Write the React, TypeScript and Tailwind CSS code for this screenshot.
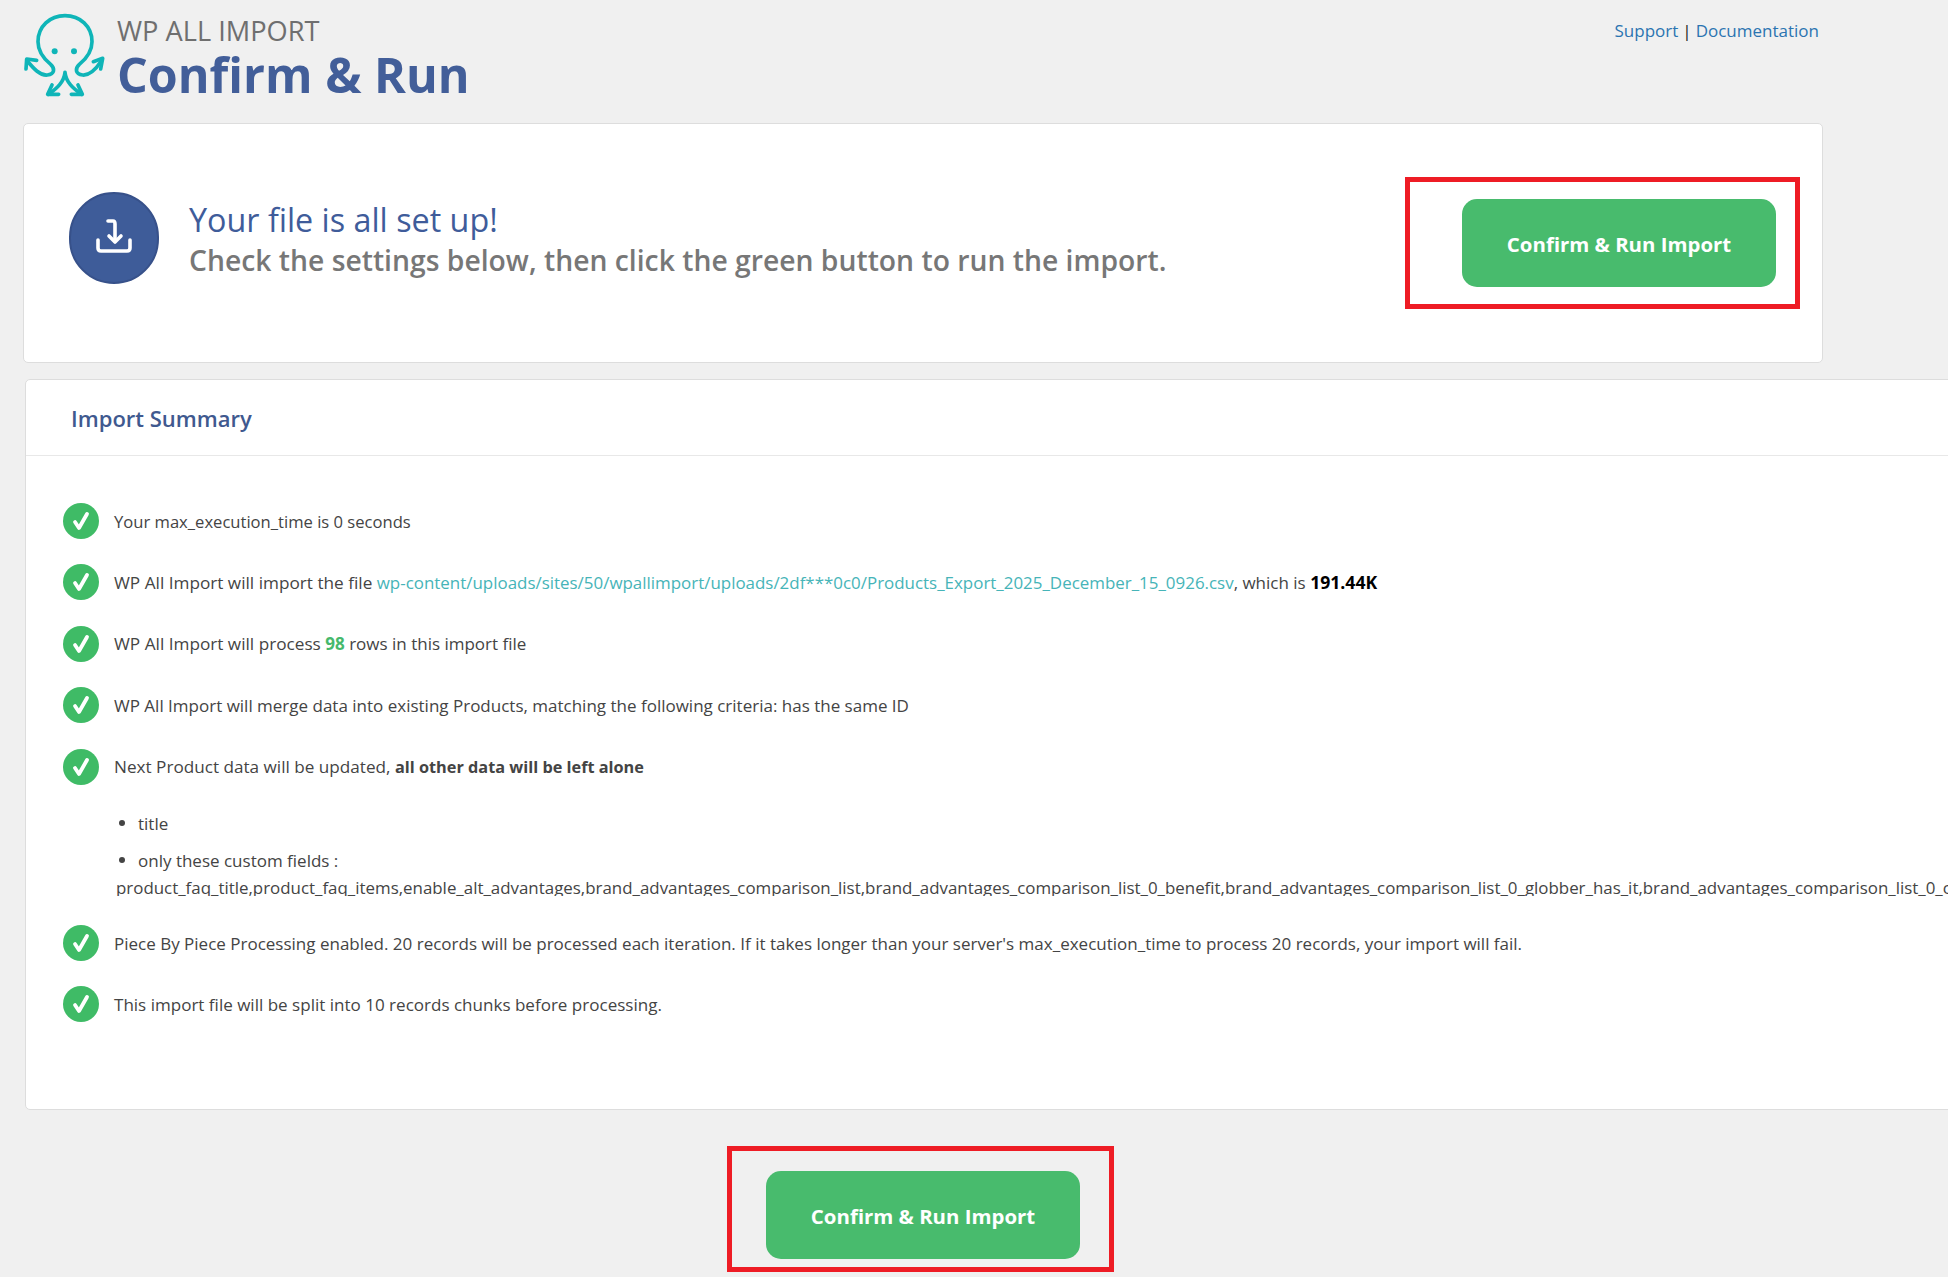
const Logo = () => (
  <svg viewBox="0 0 330 300" className="w-[110px] h-[100px] shrink-0 -ml-[15px] -mt-[3px]" fill="none" stroke="#0fb5b8" strokeWidth="11" strokeLinecap="round" strokeLinejoin="round">
    <path d="M52 168 C72 192 90 212 112 210 C135 208 135 190 122 178 C100 160 84 140 84 110 C84 64 120 32 165 32 C210 32 246 64 246 110 C246 140 230 160 208 178 C195 190 195 208 218 210 C240 212 258 192 274 168" />
    <path d="M48 192 L50 162 L80 166" />
    <path d="M250 170 L278 160 L272 192" />
    <path d="M165 202 C162 232 140 250 116 268 M165 202 C168 232 190 250 214 268" />
    <path d="M126 240 L113 268 L146 268" />
    <path d="M204 240 L217 268 L184 268" />
    <circle cx="134" cy="139" r="9" fill="#0fb5b8" stroke="none" />
    <circle cx="192" cy="139" r="9" fill="#0fb5b8" stroke="none" />
  </svg>
);

const ImportBadge = () => (
  <div className="w-[90px] h-[92px] rounded-full bg-[#3e5c99] border-2 border-[#37518a] flex items-center justify-center shrink-0">
    <svg viewBox="0 0 40 40" className="w-[40px] h-[40px]" fill="none" stroke="#ffffff" strokeWidth="3.6" strokeLinecap="round" strokeLinejoin="round">
      <path d="M14 3 H19 Q21 3 21 6 V23" />
      <path d="M15 18 L21 24 L27 18" />
      <path d="M4 22 V30 Q4 33 7 33 H33 Q36 33 36 30 V22" />
    </svg>
  </div>
);

const Check = () => (
  <div className="w-[36px] h-[36px] rounded-full bg-[#3fbb66] flex items-center justify-center shrink-0">
    <svg viewBox="0 0 36 36" className="w-[36px] h-[36px]" fill="none" stroke="#ffffff" strokeWidth="3.8" strokeLinecap="round" strokeLinejoin="round">
      <path d="M12 19 L16 25 L24 11" />
    </svg>
  </div>
);

const RunButton = () => (
  <button className="w-[314px] h-[88px] pt-[3px] rounded-[15px] bg-[#48bb6d] text-white text-[20.4px] font-bold flex items-center justify-center">
    Confirm &amp; Run Import
  </button>
);

const Row = ({ children }: { children: React.ReactNode }) => (
  <div className="flex items-center gap-[15px] h-[36px] mb-[25.4px] whitespace-nowrap">
    <Check />
    <div className="pt-[1px]">{children}</div>
  </div>
);

export default function App() {
  return (
    <div className="w-[1948px] h-[1277px] overflow-hidden bg-[#f0f0f0] text-[#444444] text-[17px] font-['Open_Sans','Noto_Sans',sans-serif]">
      <header className="h-[123px] flex items-start justify-between pl-[25px] pr-[129px]">
        <div className="flex pt-[8px]">
          <Logo />
          <div className="pt-[6px] -ml-[3px]">
            <div className="text-[27.2px] leading-[33px] text-[#6f6f6f]">WP ALL IMPORT</div>
            <div className="text-[48.4px] leading-[54px] font-bold text-[#425e99]">Confirm &amp; Run</div>
          </div>
        </div>
        <div className="pt-[18px] text-[#222222]">
          <a className="text-[#2b74b1]">Support</a><span className="mx-[4px]">|</span><a className="text-[#2b74b1]">Documentation</a>
        </div>
      </header>

      <section className="ml-[23px] w-[1800px] h-[240px] bg-white border border-[#dddddd] rounded-[5px] flex items-center justify-between pl-[45px] pr-[22px]">
        <div className="flex items-center gap-[30px] -mt-[10px]">
          <ImportBadge />
          <div className="pt-[2px]">
            <div className="text-[32.3px] leading-[41px] font-medium text-[#3f5c9a]">Your file is all set up!</div>
            <div className="text-[28.3px] leading-[40px] font-semibold text-[#777777]">Check the settings below, then click the green button to run the import.</div>
          </div>
        </div>
        <div className="border-[5px] border-[#ee1c25] pl-[52px] pr-[19px] py-[17px]">
          <RunButton />
        </div>
      </section>

      <section className="ml-[25px] mt-[16px] w-[2000px] h-[731px] bg-white border border-[#dddddd] rounded-[5px]">
        <div className="h-[76px] pt-[2px] border-b border-[#e8e8e8] flex items-center pl-[45px] text-[22px] font-semibold text-[#40598f]">Import Summary</div>
        <div className="pl-[37px] pt-[47px]">
          <Row><span className="text-[16.6px]">Your max_execution_time is 0 seconds</span></Row>
          <Row>
            <span className="text-[17.2px]">WP All Import will import the file </span><a className="text-[#46b4b8] text-[16.93px]">wp-content/uploads/sites/50/wpallimport/uploads/2df***0c0/Products_Export_2025_December_15_0926.csv</a>, which is <b className="font-bold text-black text-[17.6px]">191.44K</b>
          </Row>
          <Row>
            <span className="text-[17.2px]">WP All Import will process </span><b className="font-bold text-[#46b96c]">98</b> rows in this import file
          </Row>
          <Row>WP All Import will merge data into existing Products, matching the following criteria: has the same ID</Row>
          <Row>
            <span className="text-[17.15px]">Next Product data will be updated, </span><b className="font-bold text-[16.3px]">all other data will be left alone</b>
          </Row>
          <ul className="pl-[53px] -mt-[5px] mb-[29px] whitespace-nowrap">
            <li className="flex items-center h-[37px]"><span className="w-[6px] h-[6px] rounded-full bg-[#444444] ml-[3px] mr-[13px]" />title</li>
            <li className="flex items-center h-[37px]"><span className="w-[6px] h-[6px] rounded-full bg-[#444444] ml-[3px] mr-[13px]" />only these custom fields :</li>
            <li className="leading-[17px] text-[16.9px] overflow-hidden w-[1900px]">product_faq_title,product_faq_items,enable_alt_advantages,brand_advantages_comparison_list,brand_advantages_comparison_list_0_benefit,brand_advantages_comparison_list_0_globber_has_it,brand_advantages_comparison_list_0_c</li>
          </ul>
          <Row>Piece By Piece Processing enabled. 20 records will be processed each iteration. If it takes longer than your server's max_execution_time to process 20 records, your import will fail.</Row>
          <Row><span className="text-[17.05px]">This import file will be split into 10 records chunks before processing.</span></Row>
        </div>
      </section>

      <div className="ml-[727px] mt-[36px] w-[387px] border-[5px] border-[#ee1c25] pl-[34px] pt-[20px] pb-[8px]">
        <RunButton />
      </div>
    </div>
  );
}
